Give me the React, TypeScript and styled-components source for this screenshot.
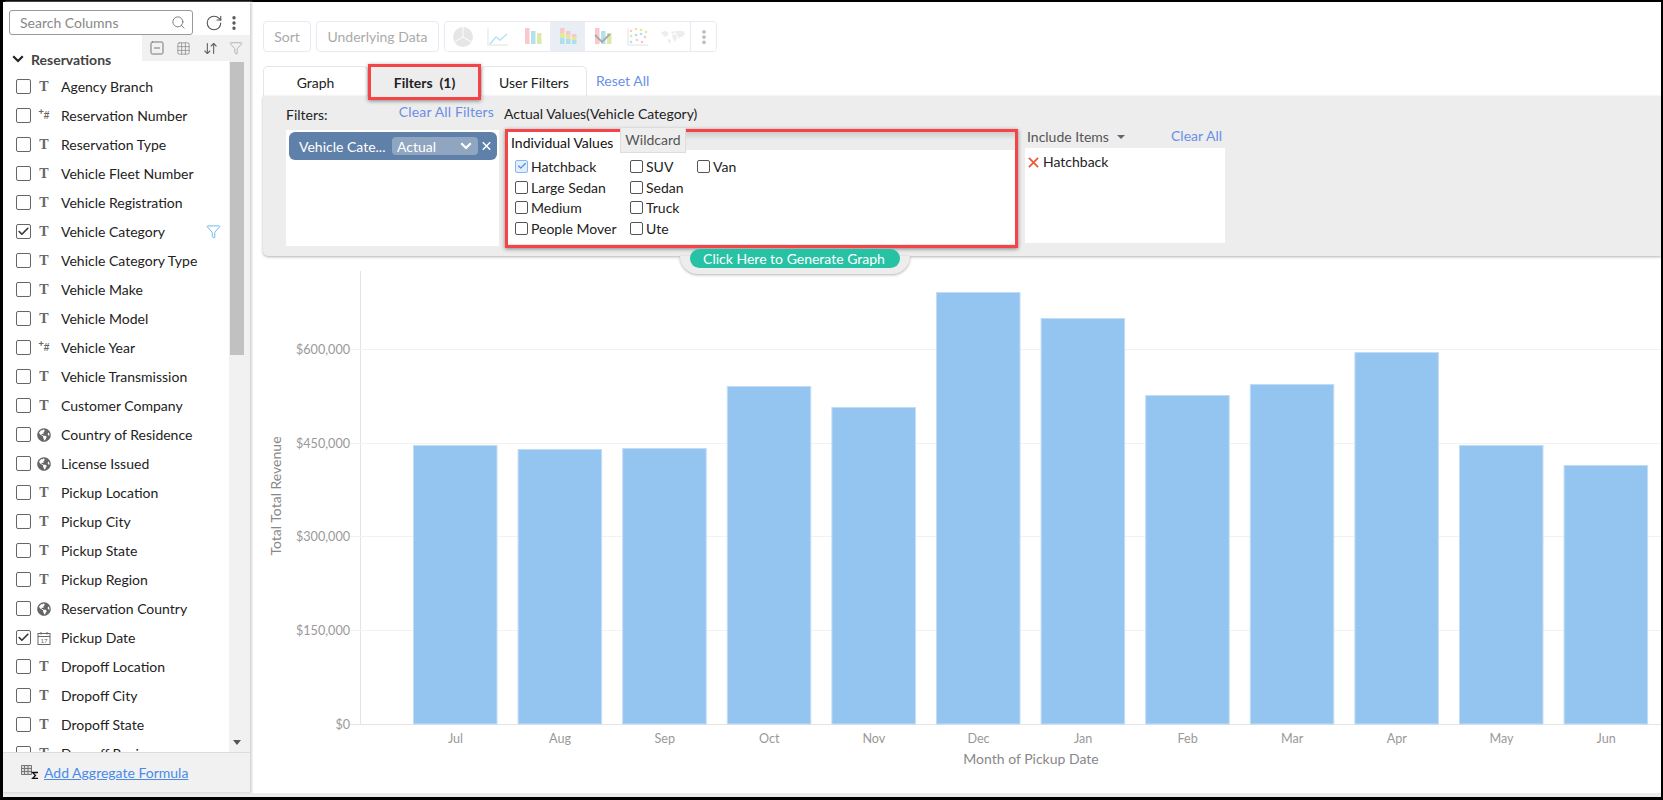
import { ArrowDownUp, Check, EllipsisVertical, Filter, Grid3x3, RotateCw, Search, SquareMinus } from 'lucide-react';
import { FaGlobeAmericas } from 'react-icons/fa';
import styled, { createGlobalStyle } from 'styled-components';

const GlobalStyle = createGlobalStyle`
  html, body {
    margin: 0;
    padding: 0;
    background: #fff;
  }
  * {
    box-sizing: border-box;
  }
`;

type ColumnKind = 'text' | 'number' | 'geo' | 'date';

const columns: Array<{ name: string; kind: ColumnKind; checked?: boolean; filtered?: boolean }> = [
  { name: 'Agency Branch', kind: 'text' },
  { name: 'Reservation Number', kind: 'number' },
  { name: 'Reservation Type', kind: 'text' },
  { name: 'Vehicle Fleet Number', kind: 'text' },
  { name: 'Vehicle Registration', kind: 'text' },
  { name: 'Vehicle Category', kind: 'text', checked: true, filtered: true },
  { name: 'Vehicle Category Type', kind: 'text' },
  { name: 'Vehicle Make', kind: 'text' },
  { name: 'Vehicle Model', kind: 'text' },
  { name: 'Vehicle Year', kind: 'number' },
  { name: 'Vehicle Transmission', kind: 'text' },
  { name: 'Customer Company', kind: 'text' },
  { name: 'Country of Residence', kind: 'geo' },
  { name: 'License Issued', kind: 'geo' },
  { name: 'Pickup Location', kind: 'text' },
  { name: 'Pickup City', kind: 'text' },
  { name: 'Pickup State', kind: 'text' },
  { name: 'Pickup Region', kind: 'text' },
  { name: 'Reservation Country', kind: 'geo' },
  { name: 'Pickup Date', kind: 'date', checked: true },
  { name: 'Dropoff Location', kind: 'text' },
  { name: 'Dropoff City', kind: 'text' },
  { name: 'Dropoff State', kind: 'text' },
  { name: 'Dropoff Region', kind: 'text' },
];

const categories = [
  { name: 'Hatchback', checked: true },
  { name: 'Large Sedan' },
  { name: 'Medium' },
  { name: 'People Mover' },
  { name: 'SUV' },
  { name: 'Sedan' },
  { name: 'Truck' },
  { name: 'Ute' },
  { name: 'Van' },
];

const bars = [
  { month: 'Jul', top: 445 },
  { month: 'Aug', top: 449 },
  { month: 'Sep', top: 448 },
  { month: 'Oct', top: 386 },
  { month: 'Nov', top: 407 },
  { month: 'Dec', top: 292 },
  { month: 'Jan', top: 318 },
  { month: 'Feb', top: 395 },
  { month: 'Mar', top: 384 },
  { month: 'Apr', top: 352 },
  { month: 'May', top: 445 },
  { month: 'Jun', top: 465 },
];

const ticks = [
  { label: '$600,000', y: 349 },
  { label: '$450,000', y: 443 },
  { label: '$300,000', y: 536 },
  { label: '$150,000', y: 630 },
  { label: '$0', y: 724 },
];

const Cross = ({ size, color }: { size: number; color: string }) => (
  <svg width={size} height={size} viewBox="0 0 12 12">
    <path d="M1 1l10 10M11 1L1 11" stroke={color} strokeWidth="2" fill="none" />
  </svg>
);

const Chevron = ({ width, color }: { width: number; color: string }) => (
  <svg width={width} height={width * 0.65} viewBox="0 0 13 8.500">
    <path d="M1.300 1.300l5.200 5.200 5.200-5.200" stroke={color} strokeWidth="2.400" fill="none" />
  </svg>
);

const TypeIcon = ({ kind }: { kind: ColumnKind }) => {
  if (kind === 'text') return <SerifT>T</SerifT>;
  if (kind === 'number') return <NumberMark><sup>+</sup>#</NumberMark>;
  if (kind === 'geo') return <FaGlobeAmericas size={14} color="#666" />;
  return (
    <svg width="14" height="14" viewBox="0 0 14 14">
      <rect x="1" y="2.500" width="12" height="11" fill="none" stroke="#666" />
      <path d="M1 5.500h12M4 1v2.500M10 1v2.500" stroke="#666" />
      <text x="7" y="12" fontSize="6" fontFamily="Lato" fill="#666" textAnchor="middle">17</text>
    </svg>
  );
};

const ChartIcons = () => (
  <>
    <ChartCell>
      <svg width="22" height="22" viewBox="0 0 22 22">
        <circle cx="11" cy="11" r="10" fill="#e6e6e6" />
        <path d="M11 1v10L2.500 16M11 11l8.500 5" stroke="#fff" fill="none" />
      </svg>
    </ChartCell>
    <ChartCell>
      <svg width="22" height="20" viewBox="0 0 22 20">
        <path d="M1 1v17h20" stroke="#e8eee8" strokeWidth="1.500" fill="none" />
        <path d="M3 17l6-7 4 3 7-6" stroke="#b5e3f0" strokeWidth="1.500" fill="none" />
      </svg>
    </ChartCell>
    <ChartCell>
      <svg width="18" height="18" viewBox="0 0 18 18">
        <rect x="1" width="4.500" height="16" fill="#f8c8cc" />
        <rect x="7" y="3" width="4.500" height="13" fill="#b3e2ee" />
        <rect x="13" y="5" width="4.500" height="11" fill="#dfe8a8" />
      </svg>
    </ChartCell>
    <ChartCell $active>
      <svg width="18" height="18" viewBox="0 0 18 18">
        <rect x="1" width="4.500" height="5" fill="#f8c8cc" />
        <rect x="1" y="5" width="4.500" height="5" fill="#e3e89a" />
        <rect x="1" y="10" width="4.500" height="6" fill="#addff0" />
        <rect x="7" y="3" width="4.500" height="4" fill="#f8c8cc" />
        <rect x="7" y="7" width="4.500" height="4" fill="#e3e89a" />
        <rect x="7" y="11" width="4.500" height="5" fill="#addff0" />
        <rect x="13" y="6" width="4.500" height="3" fill="#f8c8cc" />
        <rect x="13" y="9" width="4.500" height="3" fill="#e3e89a" />
        <rect x="13" y="12" width="4.500" height="4" fill="#addff0" />
      </svg>
    </ChartCell>
    <ChartCell>
      <svg width="18" height="18" viewBox="0 0 18 18">
        <rect x="1" width="4.500" height="16" fill="#f8c8cc" />
        <rect x="7" y="3" width="4.500" height="13" fill="#b3e2ee" />
        <rect x="13" y="5" width="4.500" height="11" fill="#dfe8a8" />
        <path d="M1 7l7 7 8-8" stroke="#a9a9a9" strokeWidth="1.800" fill="none" />
      </svg>
    </ChartCell>
    <ChartCell>
      <svg width="21" height="18" viewBox="0 0 21 18">
        <path d="M1 0v17h20" stroke="#e2e2e2" fill="none" />
        {[[4, 3, '#f8c8cc'], [9, 1, '#e3e89a'], [14, 2, '#e3e89a'], [19, 4, '#e3e89a'], [4, 8, '#e3e89a'], [9, 7, '#addff0'], [14, 6, '#addff0'], [18, 9, '#f8c8cc'], [4, 14, '#addff0'], [10, 12, '#f8c8cc'], [15, 14, '#f8c8cc']].map(([cx, cy, fill], i) => (
          <circle key={i} cx={cx} cy={cy} r="1.300" fill={fill as string} />
        ))}
      </svg>
    </ChartCell>
    <ChartCell>
      <svg width="26" height="14" viewBox="0 0 26 14">
        <path d="M1 2l5-1 3 2-2 3-2 1-3-3zM8 9l3 1-1 4-2-2zM11 2l3-1 1 2-3 1zM12 5l4-1 1 4-2 4-2-3zM15 1l8 0 2 3-3 3-2 0-1 2-2-4z" fill="#ededed" />
      </svg>
    </ChartCell>
    <ChartMore>
      <EllipsisVertical size={18} color="#bbb" strokeWidth={3} />
    </ChartMore>
  </>
);

export default function App() {
  const selectedRow = categories.filter((c) => c.checked);

  return (
    <Frame>
      <GlobalStyle />
      <Body>
        <Sidebar>
          <SearchRow>
            <SearchBox>
              <SearchPlaceholder>Search Columns</SearchPlaceholder>
              <Search size={15} color="#777" strokeWidth={1.5} />
            </SearchBox>
            <RotateCw size={18} color="#555" strokeWidth={1.5} />
            <EllipsisVertical size={18} color="#555" strokeWidth={2.5} />
          </SearchRow>
          <ListArea>
            <ToolStrip>
              <SquareMinus size={16} color="#777" strokeWidth={1.5} />
              <Grid3x3 size={15} color="#888" strokeWidth={1.2} />
              <ArrowDownUp size={15} color="#666" strokeWidth={1.8} />
              <Filter size={14} color="#999" strokeWidth={1.2} />
            </ToolStrip>
            <ColumnList>
              <GroupHeader>
                <Chevron width={12} color="#222" />
                <GroupName>Reservations</GroupName>
              </GroupHeader>
              {columns.map((col) => (
                <ColumnRow key={col.name}>
                  <RowCheck>{col.checked && <Check size={13} color="#333" strokeWidth={3} />}</RowCheck>
                  <IconSlot><TypeIcon kind={col.kind} /></IconSlot>
                  <ColumnName>{col.name}</ColumnName>
                  {col.filtered && (
                    <FilterMark>
                      <Filter size={15} color="#62b5ee" strokeWidth={1.5} />
                    </FilterMark>
                  )}
                </ColumnRow>
              ))}
            </ColumnList>
            <ScrollTrack>
              <ScrollThumb />
              <ScrollArrow />
            </ScrollTrack>
          </ListArea>
          <SideFooter>
            <svg width="18" height="14" viewBox="0 0 18 14">
              <path d="M0.500 0.500h10v9h-10zM0.500 3.500h10M0.500 6.500h10M3.500 0.500v9M7 0.500v9" stroke="#777" fill="#ddd" />
              <path d="M17 7.500h-5.500l3 3-3 3h5.500" stroke="#111" strokeWidth="1.300" fill="none" />
            </svg>
            <FormulaLink>Add Aggregate Formula</FormulaLink>
          </SideFooter>
        </Sidebar>

        <Main>
          <Toolbar>
            <ToolButton $width={48}>Sort</ToolButton>
            <ToolButton $width={123}>Underlying Data</ToolButton>
            <ChartGroup><ChartIcons /></ChartGroup>
          </Toolbar>

          <TabRow>
            <Tab $width={105}>Graph</Tab>
            <ActiveTab>Filters&nbsp; (1)</ActiveTab>
            <Tab $width={106}>User Filters</Tab>
            <ResetLink>Reset All</ResetLink>
          </TabRow>

          <FilterPanel>
            <FieldColumn>
              <FieldHeader>
                <FieldTitle>Filters:</FieldTitle>
                <ClearFilters>Clear All Filters</ClearFilters>
              </FieldHeader>
              <FieldBox>
                <FieldPill>
                  <PillName>Vehicle Cate...</PillName>
                  <PillSelect>
                    Actual
                    <Chevron width={12} color="#fff" />
                  </PillSelect>
                  <Cross size={10} color="#fff" />
                </FieldPill>
              </FieldBox>
            </FieldColumn>

            <ValuesColumn>
              <ValuesTitle>Actual Values(Vehicle Category)</ValuesTitle>
              <Highlight>
                <ValueTabs>
                  <ValueTab>Individual Values</ValueTab>
                  <WildcardTab>Wildcard</WildcardTab>
                </ValueTabs>
                <ValueGrid>
                  {categories.map((c) => (
                    <ValueItem key={c.name}>
                      <ValueCheck $checked={c.checked}>
                        {c.checked && <Check size={10} color="#4a90e2" strokeWidth={3} />}
                      </ValueCheck>
                      {c.name}
                    </ValueItem>
                  ))}
                </ValueGrid>
              </Highlight>
            </ValuesColumn>

            <IncludeColumn>
              <IncludeHeader>
                <IncludeLabel>Include Items<Caret /></IncludeLabel>
                <ClearAll>Clear All</ClearAll>
              </IncludeHeader>
              <IncludeBox>
                {selectedRow.map((c) => (
                  <IncludeItem key={c.name}>
                    <Cross size={11} color="#ee5b3a" />
                    {c.name}
                  </IncludeItem>
                ))}
              </IncludeBox>
            </IncludeColumn>

            <GenerateDock>
              <GenerateButton>Click Here to Generate Graph</GenerateButton>
            </GenerateDock>
          </FilterPanel>

          <ChartSvg viewBox="250 256 1411 537" width="1411" height="537">
            <line x1="360.500" y1="271" x2="360.500" y2="724" stroke="#e4e4e4" />
            {ticks.map((t) => (
              <g key={t.label}>
                <line x1="350" y1={t.y + 0.5} x2="1661" y2={t.y + 0.5} stroke={t.y === 724 ? '#e4e4e4' : '#f2f2f2'} />
                <AxisText x="350" y={t.y + 5} textAnchor="end">{t.label}</AxisText>
              </g>
            ))}
            {bars.map((b, i) => {
              const x = 413.5 + i * 104.6;
              return (
                <g key={b.month}>
                  <rect x={x} y={b.top + 0.5} width="83.500" height={724 - b.top - 0.5} fill="#94c5f0" stroke="#c3dcf5" />
                  <AxisText x={x + 42} y={743} textAnchor="middle">{b.month}</AxisText>
                </g>
              );
            })}
            <AxisTitle x="1031" y="764" textAnchor="middle">Month of Pickup Date</AxisTitle>
            <AxisTitle transform="translate(281 496) rotate(-90)" textAnchor="middle">Total Total Revenue</AxisTitle>
          </ChartSvg>
        </Main>
      </Body>
      <StatusBand />
    </Frame>
  );
}

const Frame = styled.div`
  width: 1663px;
  height: 800px;
  padding: 2px 2px 3px 3px;
  background: #000;
  display: flex;
  flex-direction: column;
  overflow: hidden;
  font-family: Lato, 'Liberation Sans', sans-serif;
  font-size: 14px;
  color: #222;
`;

const Body = styled.div`
  flex: 1;
  min-height: 0;
  display: flex;
  background: #fff;
`;

const StatusBand = styled.div`
  height: 4px;
  background: #ececec;
`;

const Sidebar = styled.aside`
  width: 247px;
  flex: none;
  display: flex;
  flex-direction: column;
  background: #fff;
  box-shadow: 2px 0 2px #d6d6d6;
  position: relative;
  z-index: 3;
`;

const SearchRow = styled.div`
  height: 33px;
  flex: none;
  padding: 8px 0 0 6px;
  display: flex;
  align-items: flex-start;
  & > svg {
    flex: none;
    margin-top: 4px;
  }
  & > svg:nth-child(2) {
    margin-left: 12px;
  }
  & > svg:last-child {
    margin-left: 2px;
  }
`;

const SearchBox = styled.div`
  width: 184px;
  height: 25px;
  border: 1px solid #999;
  border-radius: 3px;
  padding: 0 6px 0 10px;
  display: flex;
  align-items: center;
  justify-content: space-between;
`;

const SearchPlaceholder = styled.span`
  color: #888;
  font-size: 14px;
`;

const ListArea = styled.div`
  flex: 1;
  min-height: 0;
  display: flex;
  position: relative;
  overflow: hidden;
`;

const ToolStrip = styled.div`
  position: absolute;
  top: 0;
  right: 0;
  width: 108px;
  height: 26px;
  background: #f1f1f1;
  padding: 0 7px;
  display: flex;
  align-items: center;
  justify-content: space-between;
`;

const ColumnList = styled.div`
  flex: 1;
  min-width: 0;
  padding: 14px 0 0 13px;
`;

const GroupHeader = styled.div`
  height: 23px;
  margin-left: -4px;
  padding-top: 2px;
  display: flex;
  align-items: flex-start;
  gap: 7px;
  svg {
    margin-top: 4px;
    flex: none;
  }
`;

const GroupName = styled.span`
  font-weight: 700;
  color: #444;
  line-height: 17px;
`;

const ColumnRow = styled.div`
  height: 29px;
  display: flex;
  align-items: center;
`;

const RowCheck = styled.span`
  width: 15px;
  height: 15px;
  flex: none;
  border: 1px solid #666;
  border-radius: 2px;
  display: flex;
  align-items: center;
  justify-content: center;
`;

const IconSlot = styled.span`
  width: 16px;
  margin: 0 9px 0 5px;
  flex: none;
  display: flex;
  align-items: center;
  justify-content: center;
`;

const SerifT = styled.span`
  font-family: 'Liberation Serif', serif;
  font-weight: 700;
  font-size: 14px;
  color: #666;
`;

const NumberMark = styled.span`
  font-family: 'Liberation Sans', sans-serif;
  font-size: 10px;
  font-weight: 700;
  color: #666;
  sup {
    font-size: 9px;
    line-height: 0;
  }
`;

const ColumnName = styled.span`
  white-space: nowrap;
  color: #222;
`;

const FilterMark = styled.span`
  margin: 0 8px 0 auto;
  display: flex;
`;

const ScrollTrack = styled.div`
  width: 21px;
  flex: none;
  background: #f1f1f1;
  padding: 27px 0 7px 1px;
  display: flex;
  flex-direction: column;
  justify-content: space-between;
`;

const ScrollThumb = styled.div`
  width: 14px;
  height: 293px;
  background: #c1c1c1;
`;

const ScrollArrow = styled.div`
  width: 0;
  height: 0;
  margin-left: 3px;
  border: 4px solid transparent;
  border-top: 5px solid #555;
  border-bottom: 0;
`;

const SideFooter = styled.div`
  height: 41px;
  flex: none;
  background: #f1f1f1;
  border-top: 1px solid #ddd;
  border-bottom: 1px solid #ddd;
  padding: 0 0 1px 18px;
  display: flex;
  align-items: center;
  gap: 5px;
  position: relative;
`;

const FormulaLink = styled.a`
  color: #4a8ae8;
  text-decoration: underline;
`;

const Main = styled.main`
  flex: 1;
  min-width: 0;
  display: flex;
  flex-direction: column;
  padding-top: 19px;
`;

const Toolbar = styled.div`
  height: 31px;
  margin-left: 13px;
  display: flex;
  gap: 5px;
  flex: none;
`;

const ToolButton = styled.div<{ $width: number }>`
  width: ${(p) => p.$width}px;
  border: 1px solid #e8e9f2;
  border-radius: 4px;
  color: #aaa;
  display: flex;
  align-items: center;
  justify-content: center;
`;

const ChartGroup = styled.div`
  width: 273px;
  border: 1px solid #e8e9f2;
  border-radius: 4px;
  display: flex;
  overflow: hidden;
`;

const ChartCell = styled.div<{ $active?: boolean }>`
  width: 35px;
  flex: none;
  background: ${(p) => (p.$active ? '#e9eef5' : '#fff')};
  display: flex;
  align-items: center;
  justify-content: center;
`;

const ChartMore = styled(ChartCell)`
  flex: 1;
  border-left: 1px solid #e8e9f2;
`;

const TabRow = styled.div`
  height: 30px;
  margin: 14px 0 0 13px;
  display: flex;
  align-items: flex-start;
  flex: none;
`;

const Tab = styled.div<{ $width: number }>`
  width: ${(p) => p.$width}px;
  height: 30px;
  border: 1px solid #e4e6ec;
  border-bottom: 0;
  border-radius: 5px 5px 0 0;
  display: flex;
  align-items: center;
  justify-content: center;
  padding-top: 2px;
  color: #222;
`;

const ActiveTab = styled.div`
  width: 113px;
  height: 36px;
  margin-top: -2px;
  background: #ededed;
  border: 3px solid #f44448;
  box-shadow: 0 1px 4px rgba(0, 0, 0, 0.45);
  font-weight: 700;
  display: flex;
  align-items: center;
  justify-content: center;
  position: relative;
  z-index: 2;
`;

const ResetLink = styled.a`
  margin-left: 9px;
  line-height: 30px;
  color: #6a8fe8;
`;

const FilterPanel = styled.section`
  height: 160px;
  flex: none;
  margin-left: 13px;
  padding-left: 23px;
  background: #ededed;
  border-bottom-left-radius: 5px;
  box-shadow: 0 1px 3px rgba(0, 0, 0, 0.3);
  display: flex;
  align-items: flex-start;
  position: relative;
`;

const FieldColumn = styled.div`
  width: 213px;
  flex: none;
`;

const FieldHeader = styled.div`
  height: 34px;
  padding-right: 5px;
  display: flex;
  justify-content: space-between;
  align-items: flex-start;
`;

const FieldTitle = styled.span`
  margin-top: 10px;
  line-height: 18px;
`;

const ClearFilters = styled.a`
  margin-top: 7px;
  line-height: 18px;
  letter-spacing: 0.15px;
  color: #6a8fe8;
`;

const FieldBox = styled.div`
  height: 116px;
  padding: 2px 2px 2px 3px;
  background: #fff;
`;

const FieldPill = styled.div`
  height: 28px;
  padding: 0 6px 0 10px;
  border-radius: 6px;
  background: #5f80a8;
  color: #fff;
  display: flex;
  align-items: center;
`;

const PillName = styled.span`
  width: 93px;
  flex: none;
  white-space: nowrap;
`;

const PillSelect = styled.span`
  width: 86px;
  height: 18px;
  margin-right: 4px;
  padding: 0 6px 0 5px;
  border-radius: 4px;
  background: #8fa5c0;
  flex: none;
  display: flex;
  align-items: center;
  justify-content: space-between;
`;

const ValuesColumn = styled.div`
  width: 513px;
  margin-left: 6px;
  flex: none;
`;

const ValuesTitle = styled.div`
  margin: 9px 0 6px -1px;
  line-height: 18px;
`;

const Highlight = styled.div`
  height: 119px;
  border: 3px solid #f44448;
  box-shadow: 0 1px 4px rgba(0, 0, 0, 0.45);
  background: #fff;
  display: flex;
  flex-direction: column;
`;

const ValueTabs = styled.div`
  height: 18px;
  flex: none;
  background: linear-gradient(#cdcdcd, #ececec 45%);
  display: flex;
  align-items: flex-start;
`;

const ValueTab = styled.div`
  width: 112px;
  height: 18px;
  padding-left: 3px;
  background: #fff;
  line-height: 21px;
  color: #111;
`;

const WildcardTab = styled.div`
  width: 66px;
  height: 26px;
  margin-top: -5px;
  border: 1px solid #ddd;
  background: #eee;
  color: #555;
  text-align: center;
  line-height: 24px;
`;

const ValueGrid = styled.div`
  flex: 1;
  padding: 6px 0 0 7px;
  display: grid;
  grid-template-columns: 115px 67px auto;
  grid-template-rows: repeat(4, 20.8px);
  grid-auto-flow: column;
  justify-content: start;
  border-bottom: 1px solid #e6e6e6;
`;

const ValueItem = styled.div`
  display: flex;
  align-items: center;
  gap: 3px;
  white-space: nowrap;
`;

const ValueCheck = styled.span<{ $checked?: boolean }>`
  width: 13px;
  height: 13px;
  flex: none;
  border: 1px solid ${(p) => (p.$checked ? '#8ab8ea' : '#555')};
  border-radius: 2px;
  background: ${(p) => (p.$checked ? '#e4eefa' : '#fff')};
  display: flex;
  align-items: center;
  justify-content: center;
`;

const IncludeColumn = styled.div`
  width: 200px;
  margin-left: 7px;
  flex: none;
`;

const IncludeHeader = styled.div`
  height: 20px;
  margin-top: 32px;
  padding: 0 3px 0 2px;
  display: flex;
  justify-content: space-between;
  align-items: flex-start;
  line-height: 18px;
`;

const IncludeLabel = styled.span`
  color: #555;
  display: flex;
  align-items: center;
  gap: 8px;
`;

const Caret = styled.i`
  width: 0;
  height: 0;
  border: 4px solid transparent;
  border-top: 4px solid #666;
  border-bottom: 0;
`;

const ClearAll = styled.a`
  margin-top: -1px;
  color: #6a8fe8;
`;

const IncludeBox = styled.div`
  height: 95px;
  padding: 5px 0 0 3px;
  background: #fff;
`;

const IncludeItem = styled.div`
  display: flex;
  align-items: center;
  gap: 4px;
  line-height: 18px;
`;

const GenerateDock = styled.div`
  position: absolute;
  left: 417px;
  top: 100%;
  width: 230px;
  height: 18px;
  background: #ededed;
  border-radius: 0 0 20px 20px;
  box-shadow: 0 1px 3px rgba(0, 0, 0, 0.3);
  z-index: 1;
  display: flex;
  justify-content: center;
`;

const GenerateButton = styled.div`
  width: 210px;
  height: 19px;
  margin-top: -7px;
  padding-right: 2px;
  border-radius: 10px;
  background: #26c2a3;
  color: #fff;
  text-align: center;
  line-height: 19px;
  white-space: nowrap;
`;

const ChartSvg = styled.svg`
  display: block;
  flex: none;
`;

const AxisText = styled.text`
  font-family: Lato, 'Liberation Sans', sans-serif;
  font-size: 12.6px;
  fill: #999;
`;

const AxisTitle = styled(AxisText)`
  font-size: 14px;
  fill: #888;
`;
